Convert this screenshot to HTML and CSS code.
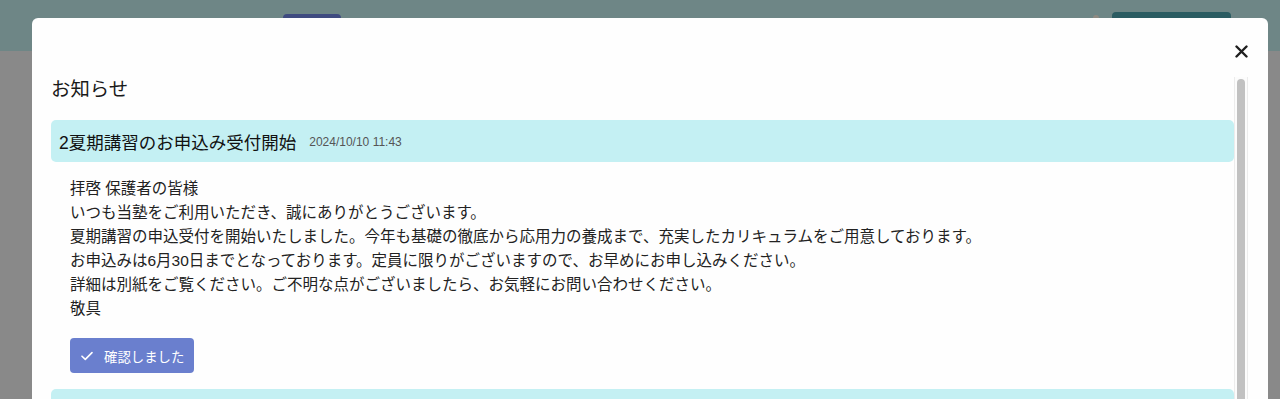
FILE: index.html
```html
<!DOCTYPE html>
<html lang="ja">
<head>
    <meta charset="UTF-8">
    <meta name="viewport" content="width=device-width, initial-scale=1.0">
    <title>お知らせ</title>
    <link rel="stylesheet" href="styles.css">
</head>
<body>

    <!-- Page header (dimmed behind the modal) -->
    <div class="topbar">
        <span class="topbar-tab"></span>
        <span class="topbar-bell"></span>
        <span class="topbar-button"></span>
    </div>

    <!-- Notice modal -->
    <div class="modal">
        <button class="modal-close" aria-label="閉じる">
            <svg width="13" height="13" viewBox="0 0 13 13">
                <path d="M1.5 1.5 L11.5 11.5 M11.5 1.5 L1.5 11.5" stroke="#1f1f1f" stroke-width="2.4" stroke-linecap="round"/>
            </svg>
        </button>

        <div class="modal-main">
            <div class="modal-body">
                <h2 class="modal-title">お知らせ</h2>

                <div class="notice">
                    <div class="notice-head">
                        <span class="notice-title">2夏期講習のお申込み受付開始</span>
                        <span class="notice-date">2024/10/10 11:43</span>
                    </div>
                    <div class="notice-text">
                        拝啓 保護者の皆様<br>
                        いつも当塾をご利用いただき、誠にありがとうございます。<br>
                        夏期講習の申込受付を開始いたしました。今年も基礎の徹底から応用力の養成まで、充実したカリキュラムをご用意しております。<br>
                        お申込みは6月30日までとなっております。定員に限りがございますので、お早めにお申し込みください。<br>
                        詳細は別紙をご覧ください。ご不明な点がございましたら、お気軽にお問い合わせください。<br>
                        敬具
                    </div>
                    <button class="confirm-btn">
                        <svg width="12" height="10" viewBox="0 0 12 10">
                            <path d="M1 5.2 L4.3 8.4 L11 1.6" fill="none" stroke="#fff" stroke-width="1.6" stroke-linecap="round" stroke-linejoin="round"/>
                        </svg>
                        確認しました
                    </button>
                </div>

                <!-- next notice, below the fold -->
                <div class="notice">
                    <div class="notice-head"></div>
                </div>
            </div>

            <!-- scrollbar of the list -->
            <div class="scroll-rail">
                <div class="scroll-thumb"></div>
            </div>
        </div>
    </div>

</body>
</html>
```

FILE: styles.css
```css
/* General styles */
body {
    font-family: "Liberation Sans", "Noto Sans CJK JP", sans-serif;
    margin: 0;
    padding: 0;
    background-color: #898989;
    height: 399px;
    overflow: hidden;
}

/* Header behind the overlay */
.topbar {
    height: 51px;
    background-color: #6e8686;
    display: flex;
    align-items: flex-start;
}

.topbar-tab {
    width: 58px;
    height: 20px;
    margin: 14px 0 0 283px;
    background-color: #3f4b80;
    border-radius: 4px;
}

.topbar-bell {
    width: 6px;
    height: 6px;
    margin: 15px 0 0 auto;
    background-color: #8e8a82;
    border-radius: 3px 3px 0 0;
}

.topbar-button {
    width: 119px;
    height: 24px;
    margin: 12px 49px 0 13px;
    background-color: #2b5c62;
    border-radius: 4px;
}

/* Modal */
.modal {
    position: fixed;
    top: 18px;
    left: 32px;
    width: 1236px;
    height: 560px;
    box-sizing: border-box;
    padding: 59px 20px 0 19px;
    background-color: #fefefe;
    border-radius: 6px;
}

.modal-close {
    position: absolute;
    top: 27px;
    right: 20px;
    width: 13px;
    height: 13px;
    padding: 0;
    border: none;
    background: none;
    display: flex;
    cursor: pointer;
}

.modal-main {
    display: flex;
    height: 440px;
}

.modal-body {
    flex: 1;
    overflow: hidden;
}

/* Scrollbar */
.scroll-rail {
    width: 12px;
    padding: 2px 0 0;
    background-color: #fcfcfc;
    border-left: 1px solid #ececec;
    border-right: 1px solid #ececec;
    display: flex;
    justify-content: center;
}

.scroll-thumb {
    width: 8px;
    height: 400px;
    background-color: #c1c1c1;
    border-radius: 4px;
}

.modal-title {
    margin: 0 0 18px;
    font-size: 19.4px;
    line-height: 25px;
    font-weight: normal;
    color: #1a1a1a;
}

/* Notice */
.notice-head {
    height: 42px;
    display: flex;
    align-items: center;
    gap: 13px;
    padding: 0 8px;
    background-color: #c4f0f3;
    border-radius: 5px;
}

.notice-title {
    font-size: 17.5px;
    color: #111;
}

.notice-date {
    font-size: 12px;
    color: #555;
    padding-top: 1px;
}

.notice-text {
    padding: 15px 19px 0;
    font-size: 15.5px;
    line-height: 24px;
    color: #222;
}

.confirm-btn {
    display: flex;
    align-items: center;
    gap: 11px;
    height: 35px;
    margin: 17px 0 16px 19px;
    padding: 0 10px 0 11px;
    border: none;
    border-radius: 4px;
    background-color: #6a7fce;
    color: #fff;
    font-family: "Liberation Sans", "Noto Sans CJK JP", sans-serif;
    font-size: 13.4px;
    cursor: pointer;
}
```
